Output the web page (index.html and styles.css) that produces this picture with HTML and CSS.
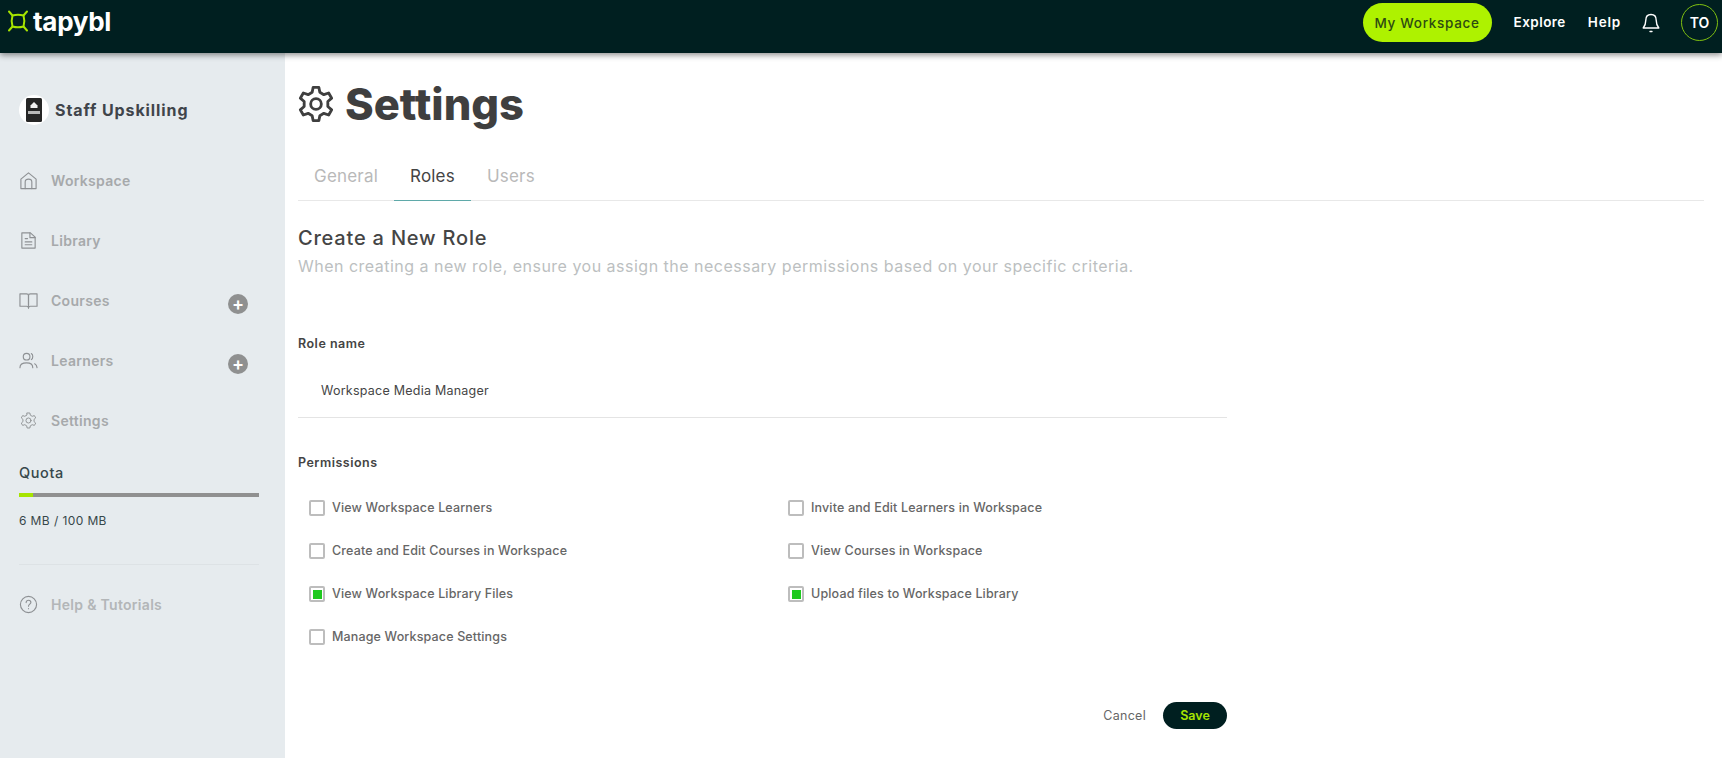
FILE: index.html
```html
<!DOCTYPE html>
<html>

	<head>
		<meta charset="UTF-8">
		<title>Settings</title>
		<link rel="stylesheet" href="styles.css">
	</head>

	<body>
		<div class="topbar">
			<div class="brand">
				<svg class="brand-mark" viewBox="0 0 22 22" fill="none" stroke="#a6e400" stroke-width="2" stroke-linecap="round" stroke-linejoin="round">
					<path d="M5.500 5.500Q11 3.800 16.500 5.500Q18.200 11 16.500 16.500Q11 18.200 5.500 16.500Q3.800 11 5.500 5.500Z"/>
					<path d="M2 1.500L5.500 5.500M20 1.500L16.500 5.500M2 20.500L5.500 16.500M20 20.500L16.500 16.500"/>
				</svg>
				<span class="brand-name">tapybl</span>
			</div>
			<div class="topbar-right">
				<a class="pill">My Workspace</a>
				<a class="toplink">Explore</a>
				<a class="toplink help-link">Help</a>
				<svg class="bell" viewBox="0 0 20 22" fill="none" stroke="#fff" stroke-width="1.400" stroke-linecap="round" stroke-linejoin="round">
					<path d="M10 2.500C6.500 2.500 4.800 5 4.800 8.200C4.800 12.500 3.800 14 2.200 16H17.800C16.200 14 15.200 12.500 15.200 8.200C15.200 5 13.500 2.500 10 2.500Z"/>
					<path d="M9 19.500H11"/>
				</svg>
				<div class="avatar">TO</div>
			</div>
		</div>

		<div class="page">
			<div class="sidebar">
				<div class="team">
					<div class="team-logo">
						<svg class="team-book" viewBox="0 0 16 24">
							<rect width="16" height="24" rx="1.500" fill="#262626"/>
							<path d="M4.500 10V7.500L8 4L11.500 7.500V10Z" fill="#f2f2f2"/>
							<rect x="2" y="13" width="12" height="3" fill="#b9b9b9"/>
						</svg>
					</div>
					<span class="team-name">Staff Upskilling</span>
				</div>

				<ul class="nav">
					<li>
						<svg class="nav-icon" viewBox="0 0 20 20"><path d="M2 18.500V8.500L10 2L18 8.500V18.500H2Z"/><path d="M6.500 18.500V11.500C6.500 9.500 8 8.500 10 8.500C12 8.500 13.500 9.500 13.500 11.500V18.500"/></svg>
						<span>Workspace</span>
					</li>
					<li>
						<svg class="nav-icon" viewBox="0 0 20 20"><path d="M3 2H12L17 6.500V18H3V2Z"/><path d="M11.500 2V7H17M6.500 8H9M6.500 11.500H13.500M6.500 14.500H13.500"/></svg>
						<span>Library</span>
					</li>
					<li>
						<svg class="nav-icon" viewBox="0 0 20 20"><path d="M1 3H8C9.200 3 10 3.800 10 5V18C10 17 9.200 16 8 16H1V3Z"/><path d="M19 3H12C10.800 3 10 3.800 10 5V18C10 17 10.800 16 12 16H19V3Z"/></svg>
						<span>Courses</span>
						<span class="plus">+</span>
					</li>
					<li>
						<svg class="nav-icon" viewBox="0 0 20 20"><circle cx="8" cy="6" r="3.500"/><path d="M1 17.500C1 14 3.500 12.500 8 12.500C12.500 12.500 14.500 14 14.500 17.500"/><path d="M13 2.800C15 3.500 15 8 13 9M16.500 13.500C18 14.300 18.800 15.500 19 17.500"/></svg>
						<span>Learners</span>
						<span class="plus">+</span>
					</li>
					<li>
						<svg class="nav-icon" viewBox="0 0 24 24"><circle cx="12" cy="12" r="3.200"/><path d="M10.300 2.500H13.700L14.300 5.300L16.700 6.700L19.400 5.800L21.100 8.700L19 10.600V13.400L21.100 15.300L19.400 18.200L16.700 17.300L14.300 18.700L13.700 21.500H10.300L9.700 18.700L7.300 17.300L4.600 18.200L2.900 15.300L5 13.400V10.600L2.900 8.700L4.600 5.800L7.300 6.700L9.700 5.300Z"/></svg>
						<span>Settings</span>
					</li>
				</ul>

				<div class="quota">
					<div class="quota-title">Quota</div>
					<div class="quota-bar"><div class="quota-fill" style="width: 6%"></div></div>
					<div class="quota-text">6 MB / 100 MB</div>
				</div>

				<div class="help">
					<svg class="nav-icon" viewBox="0 0 20 20"><circle cx="10" cy="10" r="8.500"/><path d="M7.500 8C7.500 6.500 8.600 5.500 10 5.500C11.500 5.500 12.500 6.500 12.500 7.800C12.500 9.500 10 9.800 10 11.800M10 14.300V14.500"/></svg>
					<span>Help &amp; Tutorials</span>
				</div>
			</div>

			<div class="main">
				<div class="title">
					<svg class="title-icon" viewBox="0 0 24 24"><circle cx="12" cy="12" r="3.200"/><path d="M10.300 2H13.700L14.300 5L16.700 6.400L19.600 5.400L21.400 8.500L19.100 10.500V13.500L21.400 15.500L19.600 18.600L16.700 17.600L14.300 19L13.700 22H10.300L9.700 19L7.300 17.600L4.400 18.600L2.600 15.500L4.900 13.500V10.500L2.600 8.500L4.400 5.400L7.300 6.400L9.700 5Z"/></svg>
					<h1>Settings</h1>
				</div>

				<div class="tabs">
					<a class="tab">General</a>
					<a class="tab active">Roles</a>
					<a class="tab">Users</a>
				</div>

				<h2>Create a New Role</h2>
				<p class="hint">When creating a new role, ensure you assign the necessary permissions based on your specific criteria.</p>

				<div class="form">
					<div class="label role-label">Role name</div>
					<div class="role-input">Workspace Media Manager</div>

					<div class="label perm-label">Permissions</div>
					<div class="perms">
						<label class="perm"><span class="box"></span>View Workspace Learners</label>
						<label class="perm"><span class="box"></span>Invite and Edit Learners in Workspace</label>
						<label class="perm"><span class="box"></span>Create and Edit Courses in Workspace</label>
						<label class="perm"><span class="box"></span>View Courses in Workspace</label>
						<label class="perm"><span class="box on"></span>View Workspace Library Files</label>
						<label class="perm"><span class="box on"></span>Upload files to Workspace Library</label>
						<label class="perm"><span class="box"></span>Manage Workspace Settings</label>
					</div>

					<div class="actions">
						<a class="cancel">Cancel</a>
						<a class="save">Save</a>
					</div>
				</div>
			</div>
		</div>
	</body>

</html>
```

FILE: styles.css
```css
* {
	margin: 0;
	padding: 0;
	box-sizing: border-box;
}

html,
body {
	height: 100%;
	overflow: hidden;
}

body {
	font-family: "Inter", "Liberation Sans", sans-serif;
	background: #fff;
	color: #3f3f3f;
}

/* top bar */
.topbar {
	height: 53px;
	background: #001f20;
	box-shadow: 0 2px 6px rgba(0, 0, 0, 0.45);
	display: flex;
	justify-content: space-between;
	padding: 3px 4px 0 7px;
	position: relative;
	color: #fff;
}

.brand {
	display: flex;
	align-items: center;
	height: 36px;
	gap: 4px;
}

.brand-mark {
	width: 22px;
	height: 22px;
}

.brand-name {
	font-size: 26px;
	font-weight: 700;
	letter-spacing: -0.3px;
}

.topbar-right {
	display: flex;
	align-items: flex-start;
}

.pill {
	width: 129px;
	height: 39px;
	border-radius: 20px;
	background: #aef200;
	color: #2d4a12;
	font-size: 13.5px;
	font-weight: 500;
	letter-spacing: 0.7px;
	display: flex;
	align-items: center;
	justify-content: center;
	margin-right: 22px;
}

.toplink {
	font-size: 13.5px;
	font-weight: 600;
	letter-spacing: 0.45px;
	line-height: 39px;
	margin-right: 22px;
}

.help-link {
	margin-right: 20px;
	letter-spacing: 0.8px;
}

.bell {
	width: 20px;
	height: 22px;
	margin: 9px 20px 0 0;
}

.avatar {
	width: 37px;
	height: 37px;
	margin-top: 1px;
	border: 1.5px solid #7fbf10;
	border-radius: 50%;
	font-size: 14px;
	font-weight: 600;
	display: flex;
	align-items: center;
	justify-content: center;
}

/* sidebar */
.page {
	display: flex;
	height: 705px;
}

.sidebar {
	width: 285px;
	flex-shrink: 0;
	background: #e6ebee;
	padding: 42px 26px 0 19px;
}

.team {
	display: flex;
	align-items: center;
	gap: 6px;
	height: 30px;
}

.team-logo {
	width: 30px;
	height: 30px;
	border-radius: 50%;
	background: #fff;
	display: flex;
	align-items: center;
	justify-content: center;
}

.team-book {
	width: 16px;
	height: 24px;
}

.team-name {
	font-size: 16px;
	font-weight: 700;
	letter-spacing: 0.9px;
	color: #40444a;
}

.nav {
	list-style: none;
	margin-top: 25px;
}

.nav li {
	display: flex;
	align-items: center;
	height: 60px;
	font-size: 14px;
	font-weight: 600;
	letter-spacing: 0.3px;
	color: #a6a9ab;
}

.nav-icon {
	width: 19px;
	height: 19px;
	margin: 0 13px 0 0;
	fill: none;
	stroke: #8e9194;
	stroke-width: 1.2;
	stroke-linejoin: round;
	stroke-linecap: round;
	flex-shrink: 0;
}

.plus {
	width: 20px;
	height: 20px;
	border-radius: 50%;
	background: #8f9090;
	color: #fff;
	font-size: 18px;
	line-height: 19px;
	text-align: center;
	letter-spacing: 0;
	margin: 7px 11px 0 auto;
}

.quota {
	margin-top: 14px;
	padding-bottom: 36px;
	border-bottom: 1px solid #dde2e5;
}

.quota-title {
	font-size: 14.5px;
	font-weight: 500;
	letter-spacing: 0.6px;
	color: #37474a;
}

.quota-bar {
	height: 4px;
	margin-top: 12px;
	background: #909090;
}

.quota-fill {
	height: 100%;
	background: #a6e400;
}

.quota-text {
	margin-top: 16px;
	font-size: 12px;
	letter-spacing: 0.4px;
	color: #37474a;
}

.help {
	display: flex;
	align-items: center;
	margin-top: 30px;
	font-size: 14px;
	font-weight: 600;
	letter-spacing: 0.3px;
	color: #b3b6b8;
}

/* main */
.main {
	flex: 1;
	padding: 33px 18px 0 13px;
}

.title {
	display: flex;
	align-items: center;
	gap: 9px;
	height: 36px;
	margin-left: -2px;
}

.title-icon {
	width: 40px;
	height: 40px;
	fill: none;
	stroke: #3f3f3f;
	stroke-width: 1.7;
	stroke-linejoin: round;
}

h1 {
	font-size: 43.5px;
	font-weight: 800;
	color: #3f3f3f;
}

.tabs {
	display: flex;
	margin-top: 25px;
	height: 54px;
	border-bottom: 1px solid #e8e8e8;
}

.tab {
	padding: 0 16px;
	line-height: 58px;
	height: 54px;
	font-size: 17px;
	letter-spacing: 0.2px;
	color: #b9b9b9;
}

.tab.active {
	color: #444;
	border-bottom: 1px solid #5fa9a9;
}

h2 {
	margin-top: 24px;
	font-size: 20px;
	font-weight: 500;
	letter-spacing: 0.8px;
	line-height: 26px;
	color: #454545;
}

.hint {
	margin-top: 3px;
	font-size: 16px;
	letter-spacing: 0.49px;
	line-height: 24px;
	color: #bcbfc1;
}

.form {
	width: 929px;
}

.label {
	font-size: 12.5px;
	font-weight: 600;
	letter-spacing: 0.5px;
	color: #444;
}

.role-label {
	margin-top: 57px;
	line-height: 18px;
}

.role-input {
	height: 65px;
	padding: 29px 0 0 23px;
	font-size: 12.5px;
	letter-spacing: 0.24px;
	line-height: 18px;
	color: #454545;
	border-bottom: 1px solid #e4e4e4;
}

.perm-label {
	margin-top: 36px;
	line-height: 18px;
}

.perms {
	display: grid;
	grid-template-columns: 479px 1fr;
	margin-top: 14px;
	padding-left: 11px;
}

.perm {
	display: flex;
	align-items: center;
	height: 43px;
	font-size: 12.5px;
	font-weight: 500;
	letter-spacing: 0.15px;
	color: #666;
}

.box {
	width: 16px;
	height: 16px;
	margin-right: 7px;
	border: 2px solid #bdbdbd;
	border-radius: 2px;
	background: #fff;
}

.box.on {
	padding: 1.5px;
	background: #1fc91f content-box;
}

.actions {
	display: flex;
	align-items: center;
	justify-content: flex-end;
	gap: 17px;
	margin-top: 44px;
}

.cancel {
	font-size: 12.5px;
	letter-spacing: 0.3px;
	color: #666;
}

.save {
	width: 64px;
	height: 27px;
	border-radius: 14px;
	background: #001f20;
	color: #a6e400;
	font-size: 12.5px;
	font-weight: 600;
	line-height: 27px;
	text-align: center;
}
```
